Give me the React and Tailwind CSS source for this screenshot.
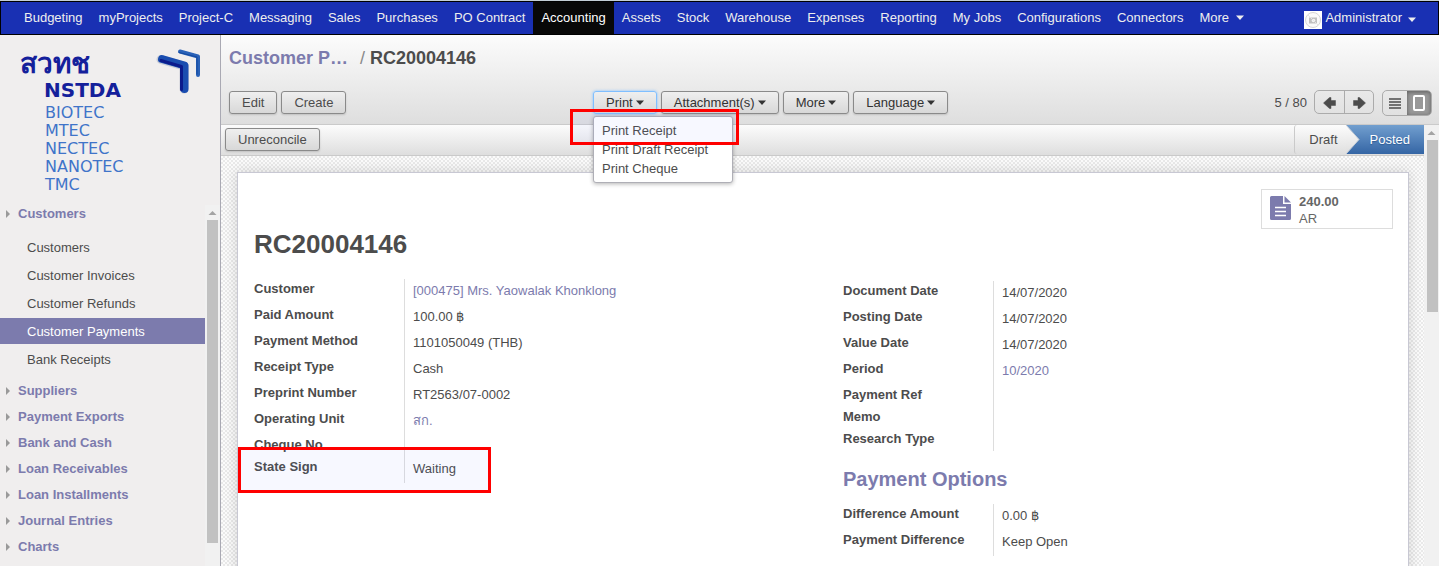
import React from "react";

const NAV = [
  "Budgeting", "myProjects", "Project-C", "Messaging", "Sales", "Purchases", "PO Contract",
  "Accounting", "Assets", "Stock", "Warehouse", "Expenses", "Reporting", "My Jobs",
  "Configurations", "Connectors",
];
const SUB_ITEMS = ["Customers", "Customer Invoices", "Customer Refunds", "Customer Payments", "Bank Receipts"];
const SECTIONS = [
  "Suppliers", "Payment Exports", "Bank and Cash", "Loan Receivables",
  "Loan Installments", "Journal Entries", "Charts",
];
const LEFT_FIELDS = [
  { label: "Customer", value: "[000475] Mrs. Yaowalak Khonklong", link: true },
  { label: "Paid Amount", value: "100.00 ฿" },
  { label: "Payment Method", value: "1101050049 (THB)" },
  { label: "Receipt Type", value: "Cash" },
  { label: "Preprint Number", value: "RT2563/07-0002" },
  { label: "Operating Unit", value: "สก.", link: true },
  { label: "Cheque No" },
  { label: "State Sign", value: "Waiting" },
];
const RIGHT_FIELDS = [
  { label: "Document Date", value: "14/07/2020" },
  { label: "Posting Date", value: "14/07/2020" },
  { label: "Value Date", value: "14/07/2020" },
  { label: "Period", value: "10/2020", link: true },
  { label: "Payment Ref" },
  { label: "Memo" },
  { label: "Research Type" },
];
const OPTION_FIELDS = [
  { label: "Difference Amount", value: "0.00 ฿" },
  { label: "Payment Difference", value: "Keep Open" },
];

function Caret() {
  return (
    <svg className="mb-0.5 ml-[3px] inline-block h-[5px] w-2 align-middle" viewBox="0 0 8 5" aria-hidden="true">
      <path d="M0 0.500h8L4 5z" fill="currentColor" />
    </svg>
  );
}

function Button({ children, caret, focused }) {
  return (
    <button
      type="button"
      className={
        "h-[23px] whitespace-nowrap rounded-[3px] border bg-linear-to-b from-[#efefef] to-[#d8d8d8] px-3 text-[13px] leading-[21px] " +
        (focused ? "border-[#80bfff] shadow-[0_0_3px_#80bfff]" : "border-[#8a8a8a] shadow-[0_1px_2px_rgba(0,0,0,0.15)]") +
        (caret ? " text-[#333]" : "")
      }
    >
      {children}
      {caret && <Caret />}
    </button>
  );
}

function TopBar() {
  return (
    <nav className="flex h-[35px] shrink-0 border-t border-[#c3ced6] text-[13px] leading-8 text-[#eeeeee]">
      <div className="flex flex-1 border border-black bg-[#1930b3] pl-[15px] pr-[14px]">
        {NAV.map((name) => (
          <a
            key={name}
            href="#"
            className={"whitespace-nowrap px-2 " + (name === "Accounting" ? "bg-[#080808] text-white" : "")}
          >
            {name}
          </a>
        ))}
        <a href="#" className="whitespace-nowrap px-2">More <Caret /></a>
        <a href="#" className="ml-auto flex items-center whitespace-nowrap px-2">
          <svg className="mr-[3px] mt-1 h-[18px] w-[18px]" viewBox="0 0 18 18" aria-hidden="true">
            <path d="M0 0h18v18H0z" fill="#fff" />
            <circle cx="9" cy="9" r="7.500" fill="#fafafa" stroke="#d6d6d6" />
            <path d="M5 6.500h8v6H5z" fill="#c0c0c0" />
            <circle cx="9.500" cy="9.500" r="1.800" fill="#f4f4f4" />
            <path d="M4 4l10 10" stroke="#e4e4e4" strokeWidth="1" />
          </svg>
          Administrator
          <span className="pl-[3px] pt-1"><Caret /></span>
        </a>
      </div>
    </nav>
  );
}

function Logo() {
  return (
    <svg className="h-[165px] w-[205px]" viewBox="0 0 205 165" role="img" aria-label="NSTDA">
      <g fill="none" strokeLinecap="round" strokeLinejoin="round">
        <path d="M161 24.500L184 31V54" stroke="#c9ccd6" strokeWidth="9" />
        <path d="M162 24L184.500 30.500V54" stroke="#1a4db0" strokeWidth="8" />
        <path d="M161 25.500L181.500 31.500V54.500" stroke="#0b1a8c" strokeWidth="3" />
        <path d="M180 16.500L198 21.500V40" stroke="#2a62b8" strokeWidth="4" />
        <path d="M179 17.500L197 22V39" stroke="#12489f" strokeWidth="1" />
      </g>
      <g fontFamily="'DejaVu Sans', 'Noto Sans', sans-serif" fontWeight="700" fill="#14209b">
        <text x="20" y="38" fontSize="28">สวทช</text>
        <text x="44" y="62" fontSize="20">NSTDA</text>
      </g>
      <g fontFamily="'DejaVu Sans', sans-serif" fontSize="16" fill="#3f74c9">
        <text x="45" y="83">BIOTEC</text>
        <text x="45" y="101">MTEC</text>
        <text x="45" y="119">NECTEC</text>
        <text x="45" y="137">NANOTEC</text>
        <text x="45" y="155">TMC</text>
      </g>
    </svg>
  );
}

function ScrollArrow() {
  return (
    <svg className="h-[15px] w-full" viewBox="0 0 14 15" aria-hidden="true">
      <path d="M3 10h8L7 6z" fill="#a3a3a3" />
    </svg>
  );
}

function Section({ name }) {
  return (
    <a href="#" className="flex h-[26px] items-center pl-1.5 pt-0.5 text-[13px] font-bold text-[#7c7bad]">
      <svg className="mr-2 h-2 w-1" viewBox="0 0 4 8" aria-hidden="true">
        <path d="M0 0v8l4-4z" fill="#9a9a9a" />
      </svg>
      {name}
    </a>
  );
}

function Sidebar() {
  return (
    <aside className="flex w-[221px] shrink-0 flex-col border-r border-[#a9a9b3] bg-[#f0eeee]">
      <Logo />
      <div className="flex min-h-0 flex-1">
        <div className="flex-1 overflow-hidden">
          <Section name="Customers" />
          <ul className="pb-1 pt-[7px] text-[13px]">
            {SUB_ITEMS.map((name) => (
              <li key={name} className="py-px">
                <a
                  href="#"
                  className={
                    "flex h-[26px] items-center pl-[27px] pt-0.5 " +
                    (name === "Customer Payments" ? "bg-[#7c7bad] text-white" : "")
                  }
                >
                  {name}
                </a>
              </li>
            ))}
          </ul>
          {SECTIONS.map((name) => <Section key={name} name={name} />)}
        </div>
        <div className="mt-[5px] w-[15px] bg-[#f1f1f1]">
          <ScrollArrow />
          <div className="ml-0.5 mr-[2px] h-[93%] max-h-[323px] bg-[#c1c1c1]" />
        </div>
      </div>
    </aside>
  );
}

function Highlight({ place }) {
  return <div aria-hidden="true" className={"pointer-events-none absolute border-[3px] border-[#ff0000] bg-[#6478ff]/5 " + place} />;
}

function PrintMenu() {
  return (
    <div className="relative flex">
      <Button caret focused>Print</Button>
      <ul className="absolute left-0 top-[25px] z-10 w-[140px] rounded-[3px] border border-[#afafb6] bg-white py-1 text-[13px] leading-[19px] shadow-[0_1px_4px_rgba(0,0,0,0.3)]">
        {["Print Receipt", "Print Draft Receipt", "Print Cheque"].map((name) => (
          <li key={name}>
            <a href="#" className="block px-2">{name}</a>
          </li>
        ))}
      </ul>
      <Highlight place="-left-[23px] top-[18px] z-20 h-9 w-[169px]" />
    </div>
  );
}

function ArrowIcon({ flip }) {
  return (
    <svg className={"mt-0.5 h-3 w-[13px] " + (flip ? "rotate-180" : "")} viewBox="0 0 13 12" aria-hidden="true">
      <path d="M0.500 6L6.500 0.500H8V3.500h4.500v5H8v3H6.500z" fill="#4c4c4c" stroke="#4c4c4c" strokeWidth="0.500" strokeLinejoin="round" />
    </svg>
  );
}

function Header() {
  return (
    <header className="flex h-[90px] shrink-0 flex-col justify-between border-b border-[#cacaca] bg-linear-to-b from-[#fcfcfc] to-[#dedede] pb-[9px] pl-2 pr-[7px]">
      <h2 className="flex pt-3 text-[18px] font-bold leading-[22px]">
        <a href="#" className="w-[131px] text-[#7c7bad]">Customer P…</a>
        <span className="pr-[5px] font-normal text-[#8a8a8a]">/</span>
        <span>RC20004146</span>
      </h2>
      <div className="flex h-[25px] items-start">
        <div className="flex w-[364px] gap-1 pt-px">
          <Button>Edit</Button>
          <Button>Create</Button>
        </div>
        <div className="flex gap-1 pt-px">
          <PrintMenu />
          <Button caret>Attachment(s)</Button>
          <Button caret>More</Button>
          <Button caret>Language</Button>
        </div>
        <div className="ml-auto flex items-start text-[13px] leading-[26px]">
          <span className="mr-[7px]">5 / 80</span>
          <div className="flex h-6 rounded-[5px] border border-[#ababab]">
            <button type="button" aria-label="Previous" className="flex w-[30px] items-center justify-center border-r border-[#ababab]"><ArrowIcon /></button>
            <button type="button" aria-label="Next" className="flex w-7 items-center justify-center"><ArrowIcon flip /></button>
          </div>
          <div className="ml-2 flex h-[26px] overflow-hidden rounded-[5px] border border-[#ababab]">
            <button type="button" aria-label="List" className="flex w-6 items-center justify-center">
              <svg className="h-[11px] w-3" viewBox="0 0 12 11" aria-hidden="true">
                <path d="M0 1h12M0 4h12M0 7h12M0 10h12" stroke="#4c4c4c" strokeWidth="1.500" />
              </svg>
            </button>
            <button type="button" aria-label="Form" className="flex w-6 items-center justify-center bg-[#999] shadow-[inset_0_1px_4px_rgba(0,0,0,0.4)]">
              <svg className="h-4 w-3" viewBox="0 0 12 16" aria-hidden="true">
                <rect x="1" y="1" width="10" height="14" rx="1" fill="none" stroke="#fff" strokeWidth="2" />
              </svg>
            </button>
          </div>
        </div>
      </div>
    </header>
  );
}

function StatusBar() {
  return (
    <div className="flex h-[31px] shrink-0 items-start border-b border-[#cacaca] bg-linear-to-b from-[#fcfcfc] to-[#dedede] pl-1 text-[13px]">
      <div className="flex pt-[3px]"><Button>Unreconcile</Button></div>
      <ol className="ml-auto flex h-[29px] leading-[29px]">
        <li className="rounded-l-[3px] border-l border-[#cacaca] pl-3.5 pr-2">Draft</li>
        <li className="flex bg-linear-to-b from-[#729fcf] to-[#3465a4] pr-3.5 text-white [text-shadow:0_1px_1px_#2c5a94]">
          <svg className="mr-[10px] h-[29px] w-[14px]" viewBox="0 0 14 29" aria-hidden="true">
            <defs>
              <linearGradient id="step" x1="0" y1="0" x2="0" y2="1">
                <stop offset="0" stopColor="#fcfcfc" />
                <stop offset="1" stopColor="#dedede" />
              </linearGradient>
            </defs>
            <path d="M0 0l13 14.500L0 29z" fill="url(#step)" />
            <path d="M0 0l13 14.500L0 29" fill="none" stroke="#c4ccd6" />
          </svg>
          Posted
        </li>
      </ol>
    </div>
  );
}

function Fields({ rows, children }) {
  return (
    <dl className="relative text-[13px] leading-5">
      {rows.map((row) => (
        <div key={row.label} className={"flex " + (row.value ? "h-[26px]" : "h-[22px]")}>
          <dt className="w-[150px] shrink-0 font-bold">{row.label}</dt>
          <dd className="border-l border-[#dddddd] pl-2 pt-0.5">
            {row.link ? <a href="#" className="text-[#7c7bad]">{row.value}</a> : row.value}
          </dd>
        </div>
      ))}
      {children}
    </dl>
  );
}

function Sheet() {
  return (
    <main className="flex-1 overflow-hidden bg-[repeating-conic-gradient(#e9e9e9_0_25%,#fbfbfb_0_50%)] bg-[length:4px_4px] pl-4 pr-[15px] pt-4">
      <div className="h-[640px] border border-[#c8c8d3] bg-white px-4 pt-4 shadow-[0_0_12px_rgba(0,0,0,0.15)]">
        <div className="-mr-px flex justify-end">
          <button type="button" className="flex h-10 w-[132px] items-center border border-[#dddddd] pl-2 text-left text-[13px] leading-[17px] text-[#666]">
            <svg className="mb-0.5 mr-2 h-6 w-[21px]" viewBox="0 0 21 24" aria-hidden="true">
              <path d="M1.500 0H13v8h8v14.500q0 1.500-1.500 1.500h-18Q0 24 0 22.500v-21Q0 0 1.500 0z" fill="#7c7bad" />
              <path d="M14.500 0L21 6.500h-6.500z" fill="#7c7bad" />
              <path d="M5 11.500h11M5 15.500h11M5 19.500h11" stroke="#fff" strokeWidth="1.500" />
            </svg>
            <span className="pt-0.5">
              <strong className="block">240.00</strong>
              <span className="block">AR</span>
            </span>
          </button>
        </div>
        <h1 className="text-[26px] font-bold leading-[30px]">RC20004146</h1>
        <div className="grid grid-cols-2 pt-5">
          <Fields rows={LEFT_FIELDS}>
            <Highlight place="-left-4 top-[168px] h-[46px] w-[253px]" />
          </Fields>
          <div className="pl-5 pt-0.5">
            <Fields rows={RIGHT_FIELDS} />
            <h3 className="pb-[13px] pt-4 text-[20px] font-bold leading-6 text-[#7c7bad]">Payment Options</h3>
            <Fields rows={OPTION_FIELDS} />
          </div>
        </div>
      </div>
    </main>
  );
}

export default function App() {
  return (
    <div className="flex h-screen flex-col overflow-hidden font-['Liberation_Sans',Arial,sans-serif] text-[#4c4c4c]">
      <TopBar />
      <div className="flex min-h-0 flex-1">
        <Sidebar />
        <div className="flex min-w-0 flex-1 flex-col">
          <Header />
          <div className="flex min-h-0 flex-1">
            <div className="flex min-w-0 flex-1 flex-col">
              <StatusBar />
              <Sheet />
            </div>
            <div className="w-[15px] shrink-0 bg-[#f1f1f1]">
              <ScrollArrow />
              <div className="ml-[3px] mr-px h-[39%] bg-[#c1c1c1]" />
            </div>
          </div>
        </div>
      </div>
    </div>
  );
}
